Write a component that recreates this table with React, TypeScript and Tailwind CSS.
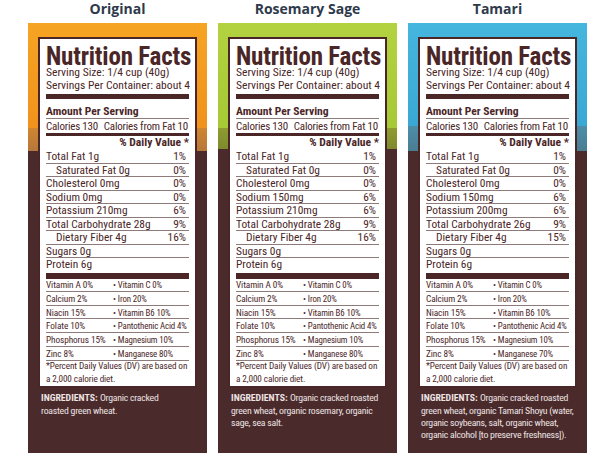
const CONDENSED = "font-['Roboto',sans-serif] [font-stretch:condensed]";

interface Nutrient {
  label: string;
  value?: string;
  indent?: boolean;
}

interface Flavor {
  name: string;
  background: string;
  nutrients: Nutrient[];
  vitamins: [string, string][];
  ingredients: string[];
}

const vitaminsFor = (manganese: string): [string, string][] => [
  ["Vitamin A 0%", "Vitamin C 0%"],
  ["Calcium 2%", "Iron 20%"],
  ["Niacin 15%", "Vitamin B6 10%"],
  ["Folate 10%", "Pantothenic Acid 4%"],
  ["Phosphorus 15%", "Magnesium 10%"],
  ["Zinc 8%", `Manganese ${manganese}`],
];

const nutrientsFor = (sodium: string, potassium: string, carbs: string, fiber: string): Nutrient[] => [
  { label: "Total Fat 1g", value: "1%" },
  { label: "Saturated Fat 0g", value: "0%", indent: true },
  { label: "Cholesterol 0mg", value: "0%" },
  { label: `Sodium ${sodium}`, value: sodium === "0mg" ? "0%" : "6%" },
  { label: `Potassium ${potassium}`, value: "6%" },
  { label: `Total Carbohydrate ${carbs}`, value: "9%" },
  { label: "Dietary Fiber 4g", value: fiber, indent: true },
  { label: "Sugars 0g" },
];

const FLAVORS: Flavor[] = [
  {
    name: "Original",
    background: "bg-[linear-gradient(180deg,#f6a424_0px,#f0921c_105px,#cf8630_105px,#b6773a_128px,#4a2a2b_128px)]",
    nutrients: nutrientsFor("0mg", "210mg", "28g", "16%"),
    vitamins: vitaminsFor("80%"),
    ingredients: ["Organic cracked", "roasted green wheat."],
  },
  {
    name: "Rosemary Sage",
    background: "bg-[linear-gradient(180deg,#b3d23f_0px,#a6c936_105px,#8f9c2f_105px,#7f8a2e_126px,#4a2a2b_126px)]",
    nutrients: nutrientsFor("150mg", "210mg", "28g", "16%"),
    vitamins: vitaminsFor("80%"),
    ingredients: ["Organic cracked roasted", "green wheat, organic rosemary, organic", "sage, sea salt."],
  },
  {
    name: "Tamari",
    background: "bg-[linear-gradient(180deg,#45b6de_0px,#3aa8d4_103px,#4d8ea8_103px,#4a7d92_128px,#4a2a2b_128px)]",
    nutrients: nutrientsFor("150mg", "200mg", "26g", "15%"),
    vitamins: vitaminsFor("70%"),
    ingredients: [
      "Organic cracked roasted",
      "green wheat, organic Tamari Shoyu (water,",
      "organic soybeans, salt, organic wheat,",
      "organic alcohol [to preserve freshness]).",
    ],
  },
];

function Label({ flavor }: { flavor: Flavor }) {
  return (
    <div className={`mx-[10px] border-2 border-[#4a2627] bg-white px-[6px] whitespace-nowrap text-[#4a2627] ${CONDENSED}`}>
      <div className="pt-[9px] text-[25px] leading-[18px] font-bold tracking-[-0.2px]">Nutrition Facts</div>
      <div className="text-[11.6px] leading-[13px]">Serving Size: 1/4 cup (40g)</div>
      <div className="text-[11.6px] leading-[13px]">Servings Per Container: about 4</div>
      <div className="mt-[1.5px] h-[5px] bg-[#4a2627]" />

      <div className="border-b border-[#8e7b79] pt-[6px] text-[11.6px] leading-[13px] font-bold">
        Amount Per Serving
      </div>
      <div className="flex justify-between border-b-[3px] border-[#4a2627] pt-[1.5px] pr-[1px] text-[11px] leading-[13px] tracking-[-0.2px]">
        <span>Calories 130</span>
        <span>Calories from Fat 10</span>
      </div>
      <div className="pb-[1px] text-right text-[11.6px] leading-[13px] font-bold">% Daily Value *</div>

      {flavor.nutrients.map(item => (
        <div
          key={item.label}
          className={`flex justify-between border-b border-[#8e7b79] pr-[3px] text-[11.4px] leading-[12.5px] ${item.indent ? "pl-[10px]" : ""}`}
        >
          <span>{item.label}</span>
          {item.value ? <span>{item.value}</span> : null}
        </div>
      ))}
      <div className="text-[11.4px] leading-[12.5px]">Protein 6g</div>
      <div className="mt-[2px] h-[6px] bg-[#4a2627]" />

      <div className="text-[9.3px] tracking-[-0.1px]">
        {flavor.vitamins.map(([left, right], index) => (
          <div
            key={left}
            className={`grid grid-cols-[67px_1fr] border-b border-[#8e7b79] leading-[10.8px] ${index === 0 ? "pt-[1.5px]" : "pt-[2px]"}`}
          >
            <span>{left}</span>
            <span className="text-[8.9px] tracking-[-0.15px]">
              <span className="mr-[2px]">•</span>
              {right}
            </span>
          </div>
        ))}
      </div>
      <div className="-mt-[1.5px] pb-[1px] text-[9.2px] leading-[13px] tracking-[-0.1px]">
        *Percent Daily Values (DV) are based on
        <br />
        a 2,000 calorie diet.
      </div>
    </div>
  );
}

function FlavorPanel({ flavor }: { flavor: Flavor }) {
  return (
    <div className="flex w-[179px] flex-col">
      <h2 className="mb-[6px] text-center font-['Open_Sans',sans-serif] text-[14px] leading-[17px] font-bold text-[#2e3a4b]">
        {flavor.name}
      </h2>
      <div className={`h-[430px] pt-[14px] ${flavor.background}`}>
        <Label flavor={flavor} />
        <div className={`mt-[4px] ml-[13px] text-[9.8px] leading-[12.3px] tracking-[-0.25px] whitespace-nowrap text-[#ece3e3] ${CONDENSED}`}>
          {flavor.ingredients.map((line, index) => (
            <div key={line}>
              {index === 0 ? <span className="font-bold tracking-[0px]">INGREDIENTS: </span> : null}
              {line}
            </div>
          ))}
        </div>
      </div>
    </div>
  );
}

export default function App() {
  return (
    <div className="flex h-[462px] w-[616px] gap-[11px] bg-white pl-[28px]">
      {FLAVORS.map(flavor => <FlavorPanel key={flavor.name} flavor={flavor} />)}
    </div>
  );
}
